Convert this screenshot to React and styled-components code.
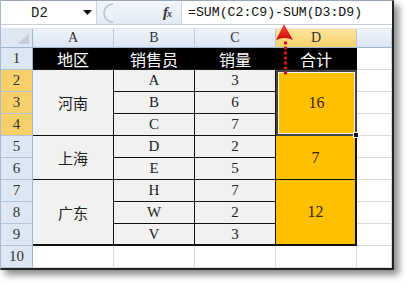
import React from 'react';
import styled, { createGlobalStyle, css } from 'styled-components';

const GlobalStyle = createGlobalStyle`
  body {
    margin: 0;
    background: #fff;
  }
`;

const Page = styled.div`
  width: 415px;
  height: 291px;
  background: #fff;
`;

const Window = styled.div`
  position: relative;
  width: 394px;
  height: 270px;
  box-sizing: border-box;
  border-left: 1px solid #a9b8cc;
  border-right: 2px solid #222;
  border-bottom: 2px solid #222;
  border-top: 1px solid #9aa6b6;
  box-shadow: 5px 5px 7px rgba(0, 0, 0, 0.45);
  display: flex;
  flex-direction: column;
  background: #fff;
`;

const FormulaBar = styled.div`
  height: 23px;
  display: flex;
  align-items: stretch;
  border-bottom: 1px solid #c5cfdc;
`;

const NameBox = styled.div`
  width: 96px;
  display: flex;
  align-items: center;
  justify-content: space-between;
  padding: 0 4px 0 30px;
  box-sizing: border-box;
  background: #fff;
  border-right: 1px solid #c9d3df;
  font-family: 'Liberation Mono', monospace;
  font-size: 14px;
  color: #222;
`;

const ButtonArea = styled.div`
  width: 85px;
  display: flex;
  align-items: center;
  justify-content: space-between;
  padding: 0 10px 0 4px;
  box-sizing: border-box;
  background: linear-gradient(#f3f6fb, #e2e9f3);
  border-right: 1px solid #c9d3df;
`;

const Fx = styled.span`
  font-family: 'Liberation Serif', serif;
  font-style: italic;
  font-weight: bold;
  font-size: 15px;
  color: #333;
  letter-spacing: -1px;

  small {
    font-size: 10px;
  }
`;

const FormulaInput = styled.div`
  flex: 1;
  display: flex;
  align-items: center;
  padding-left: 6px;
  font-family: 'Liberation Mono', monospace;
  font-size: 13.2px;
  color: #111;
  background: #fff;
`;

const Gap = styled.div`
  height: 3px;
  background: #fff;
  border-bottom: 1px solid #dfe5ee;
`;

const Sheet = styled.div`
  display: grid;
  grid-template-columns: 32px 81px 81px 81px 81px 1fr;
  grid-template-rows: 19px repeat(9, 22px) 1fr;
  flex: 1;
  font-family: 'Liberation Serif', 'Noto Sans CJK SC', serif;
`;

const Corner = styled.div`
  background: #dfe7f2;
  border-right: 1px solid #9eb6ce;
  border-bottom: 1px solid #9eb6ce;
  position: relative;

  &::after {
    content: '';
    position: absolute;
    right: 3px;
    bottom: 3px;
    border-left: 11px solid transparent;
    border-bottom: 11px solid #c3ccd8;
  }
`;

const ColHead = styled.div`
  display: flex;
  align-items: center;
  justify-content: center;
  font-size: 14px;
  color: #333;
  box-sizing: border-box;
  border-right: 1px solid #b7c7da;
  border-bottom: 1px solid #9eb6ce;
  background: ${(p) =>
    p.$active ? 'linear-gradient(#fbe59b, #f6d16a)' : 'linear-gradient(#eef3fa, #dbe5f2)'};
`;

const RowHead = styled.div`
  display: flex;
  align-items: center;
  justify-content: center;
  font-size: 15px;
  color: #333;
  box-sizing: border-box;
  border-right: 1px solid #9eb6ce;
  border-bottom: 1px solid #b3c3d8;
  background: ${(p) => (p.$active ? '#f7d06a' : '#dde7f4')};
`;

const Cell = styled.div`
  display: flex;
  align-items: center;
  justify-content: center;
  box-sizing: border-box;
  font-size: 15px;
  color: #222;
  background: #f1f1f1;
  border-right: 1px solid #111;
  border-bottom: 1px solid #111;
  grid-row: ${(p) => p.$row} / span ${(p) => p.$span || 1};
  grid-column: ${(p) => p.$col};
  ${(p) => p.$last && css`border-bottom-width: 2px;`}
  ${(p) =>
    p.$head &&
    css`
      background: #000;
      color: #fff;
      font-size: 16px;
      border-right-color: #000;
    `}
  ${(p) =>
    p.$total &&
    css`
      background: #ffc000;
      color: #3d2200;
      font-size: 16px;
      border-right-width: 2px;
    `}
`;

const Selected = styled(Cell)`
  position: relative;
  border: 2px solid #444;
  box-shadow: inset 0 0 0 1px #f4f4f4;

  &::after {
    content: '';
    position: absolute;
    right: -4px;
    bottom: -4px;
    width: 4px;
    height: 4px;
    background: #111;
    border: 1px solid #fff;
  }
`;

const Blank = styled.div`
  box-sizing: border-box;
  background: #fff;
  border-right: 1px solid #dadada;
  border-bottom: 1px solid #dadada;
  grid-row: ${(p) => p.$row};
  grid-column: ${(p) => p.$col};
`;

const Arrow = styled.svg`
  position: absolute;
  left: 272px;
  top: 22px;
  pointer-events: none;
`;

const regions = [
  { name: '河南', row: 3, span: 3, total: 16 },
  { name: '上海', row: 6, span: 2, total: 7 },
  { name: '广东', row: 8, span: 3, total: 12 },
];

const sales = [
  ['A', 3], ['B', 6], ['C', 7], ['D', 2], ['E', 5], ['H', 7], ['W', 2], ['V', 3],
];

export default function App() {
  return (
    <Page>
      <GlobalStyle />
      <Window>
        <FormulaBar>
          <NameBox>
            D2
            <svg width="9" height="6" viewBox="0 0 9 6">
              <path d="M0 0 H9 L4.5 5 Z" fill="#111" />
            </svg>
          </NameBox>
          <ButtonArea>
            <svg width="14" height="20" viewBox="0 0 14 20">
              <path d="M12 1 A9 9 0 0 0 12 19" fill="#eef2f7" stroke="#b9c2cd" strokeWidth="1.5" />
            </svg>
            <Fx>f<small>x</small></Fx>
          </ButtonArea>
          <FormulaInput>=SUM(C2:C9)-SUM(D3:D9)</FormulaInput>
        </FormulaBar>
        <Gap />
        <Sheet>
          <Corner />
          {['A', 'B', 'C', 'D'].map((c) => (
            <ColHead key={c} $active={c === 'D'}>{c}</ColHead>
          ))}
          <ColHead />
          {Array.from({ length: 10 }, (_, i) => (
            <RowHead
              key={i}
              $active={i >= 1 && i <= 3}
              style={{ gridRow: i + 2, gridColumn: 1 }}
            >
              {i + 1}
            </RowHead>
          ))}
          <Cell $head $row={2} $col={2}>地区</Cell>
          <Cell $head $row={2} $col={3}>销售员</Cell>
          <Cell $head $row={2} $col={4}>销量</Cell>
          <Cell $head $row={2} $col={5}>合计</Cell>
          {regions.map((r) => (
            <Cell key={r.name} $row={r.row} $span={r.span} $col={2} $last={r.row === 8}>
              {r.name}
            </Cell>
          ))}
          {sales.map(([who, n], i) => (
            <React.Fragment key={who}>
              <Cell $row={i + 3} $col={3} $last={i === 7}>{who}</Cell>
              <Cell $row={i + 3} $col={4} $last={i === 7}>{n}</Cell>
            </React.Fragment>
          ))}
          {regions.map((r, i) =>
            i === 0 ? (
              <Selected key={r.name} $total $row={r.row} $span={r.span} $col={5}>
                {r.total}
              </Selected>
            ) : (
              <Cell key={r.name} $total $row={r.row} $span={r.span} $col={5} $last={r.row === 8}>
                {r.total}
              </Cell>
            )
          )}
          {Array.from({ length: 10 }, (_, i) => (
            <Blank key={'e' + i} $row={i + 2} $col={6} />
          ))}
          {[2, 3, 4, 5].map((c) => (
            <Blank key={'r' + c} $row={11} $col={c} />
          ))}
        </Sheet>
        <Arrow width="24" height="56" viewBox="0 0 24 56">
          <defs>
            <linearGradient id="head" x1="0" y1="0" x2="0" y2="1">
              <stop offset="0" stopColor="#ff4a3a" />
              <stop offset="1" stopColor="#c80d0d" />
            </linearGradient>
          </defs>
          <path d="M11 1 L20 17 Q12 13 3 17 Z" fill="url(#head)" />
          {[20, 25, 30, 35, 40, 45, 50].map((y) => (
            <circle key={y} cx="12.5" cy={y} r="1.8" fill="#d0141a" />
          ))}
        </Arrow>
      </Window>
    </Page>
  );
}
